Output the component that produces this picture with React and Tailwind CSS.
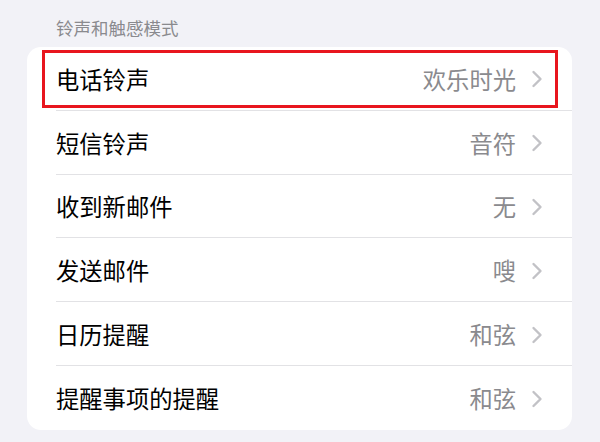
import React from "react";

const rows = [
  ["电话铃声", "欢乐时光"],
  ["短信铃声", "音符"],
  ["收到新邮件", "无"],
  ["发送邮件", "嗖"],
  ["日历提醒", "和弦"],
  ["提醒事项的提醒", "和弦"],
];

function Chevron() {
  return (
    <svg width="13" height="18" viewBox="0 0 13 18" className="ml-[15px] mr-[28px] shrink-0">
      <path d="M2.5 2 L9.5 9 L2.5 16" fill="none" stroke="#c2c2c6" strokeWidth="2.4" strokeLinecap="round" strokeLinejoin="round" />
    </svg>
  );
}

export default function App() {
  return (
    <div
      className="w-[600px] h-[442px] bg-[#f2f2f7] overflow-hidden"
      style={{ fontFamily: '"Noto Sans CJK SC", "Noto Sans", sans-serif' }}
    >
      <div className="pl-[56px] pt-[16px] h-[47px] text-[17.5px] leading-[24px] text-[#8a8a8e]">
        铃声和触感模式
      </div>
      <div className="ml-[27px] w-[545px] bg-white rounded-[14px] overflow-hidden">
        {rows.map(([label, value], i) => (
          <div key={label} className="relative h-[63.8px] flex flex-col">
            <div className="flex-1 flex items-center pl-[29px] pt-[2px]">
              <span className="flex-1 text-[23.3px] text-black leading-none">{label}</span>
              <span className="text-[23.3px] text-[#8a8a8e] leading-none">{value}</span>
              <Chevron />
            </div>
            {i < rows.length - 1 && <div className="ml-[29px] h-px bg-[#e2e2e5]" />}
            {i === 0 && (
              <div className="absolute left-[15px] right-[14px] top-[3px] bottom-[3px] border-[3px] border-[#e8161e]" />
            )}
          </div>
        ))}
      </div>
    </div>
  );
}
